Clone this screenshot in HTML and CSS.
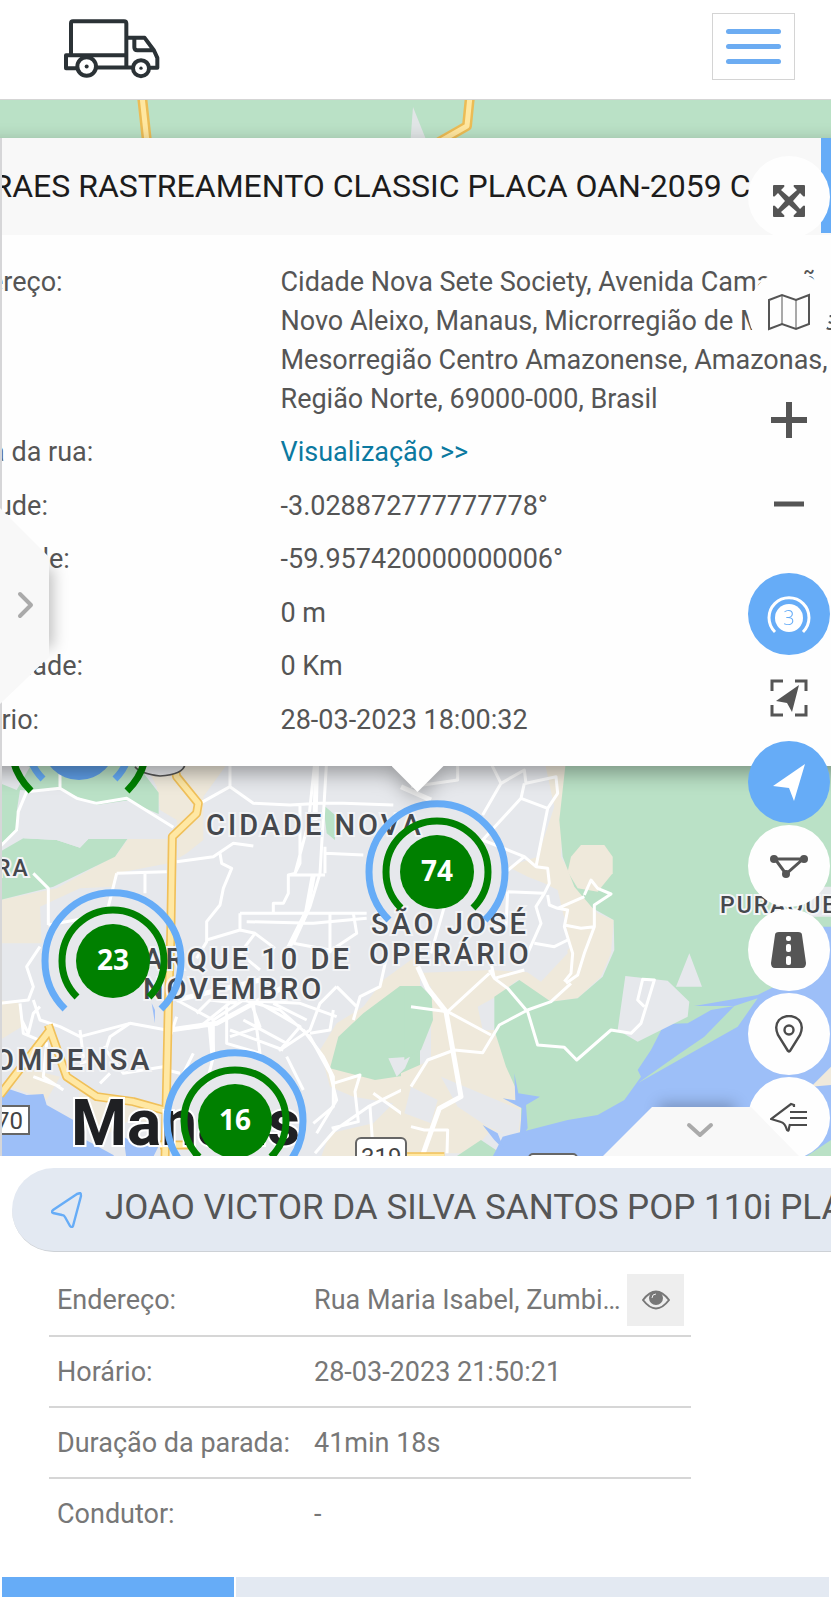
FILE: index.html
```html
<!DOCTYPE html>
<html lang="pt-BR">
<head>
<meta charset="utf-8">
<meta name="viewport" content="width=device-width, initial-scale=1">
<title>Rastreamento</title>
<link rel="stylesheet" href="styles.css">
</head>
<body>
<header class="topbar">
  <a href="#" class="logo" aria-label="Início">
    <svg viewBox="188 50 294 188" fill="none" stroke="#2b3236" stroke-width="12" stroke-linejoin="round">
      <path d="M212 164V68q0-6 6-6h153q7 0 7 7v131M212 164H378M212 164h-15v39h33M290 201H396M378 112h55l28 38 10 22v30h-22M402 114v26q0 9 9 9h49"/>
      <circle cx="259" cy="198" r="28"/><circle cx="422" cy="203" r="24"/>
      <circle cx="259" cy="198" r="6" fill="#2b3236" stroke="none"/><circle cx="422" cy="203" r="5" fill="#2b3236" stroke="none"/>
    </svg>
  </a>
  <button class="menu" aria-label="Menu"><span></span><span></span><span></span></button>
</header>

<main class="map">
  <svg class="canvas" viewBox="0 100 831 1056" preserveAspectRatio="xMinYMin slice">
    <rect y="100" width="831" height="1056" fill="#e6e8ec"/>
    <rect y="100" width="831" height="100" fill="#bae1c6"/>
    <path d="M413 107l16 40h-19z" fill="#e1e5e6"/>
    <g fill="none" stroke-linejoin="round">
      <path d="M142 96l5 46M470 96l-3 30-28 16" stroke="#ecbc55" stroke-width="10"/>
      <path d="M142 96l5 46M470 96l-3 30-28 16" stroke="#ffe7a0" stroke-width="5"/>
    </g>

    <g transform="translate(0 740) scale(.33333)">
      <path class="sand" d="M430 60H690L610 170V300L560 340 535 355 530 240 480 210 470 140zM0 480L170 445 350 345 385 295 510 297 505 370 350 400 340 440 240 445 120 500 125 610H0zM0 780L60 790 65 860 0 900z"/>
      <path class="sand" d="M1260 640L1150 720 1090 800 1010 850 960 930 990 1040 1060 1070 1180 1090 1120 1150 990 1180 960 1260H1260zM240 1040L490 1110 480 1150 390 1140 310 1190 230 1150zM60 980L180 1010 140 1080 30 1040z"/>
      <path class="green" d="M0 60H400L476 158V222L400 190 290 205 180 160 60 150 50 215 0 215zM0 215L50 215 55 270 0 325zM0 335L70 295 170 300 240 323 265 297 382 297 345 350 160 440 0 480z"/>
      <path class="green" d="M1200 738H1260V1000L1125 1020 990 985 1015 890 1090 820zM970 195L1005 225 1005 300 980 280z"/>
      <path class="city" d="M1165 955L1230 950 1215 985 1190 1010zM0 130L50 150 90 80 0 60zM60 160L180 148 290 195 390 180 510 265 500 297H265L240 323 170 300 70 295z"/>
      <path class="water" d="M0 1050L20 1045 80 1065 130 1062 140 1095 220 1140 240 1190 340 1245 350 1260H0zM370 1190l45 25 60 5-20 40H380zM455 790l10 20v40z"/>
      <g class="road">
        <path d="M-5 325L50 270 55 215 80 155 180 145 230 175 290 190 380 175 520 262M180 60V145M530 365L640 350 700 310 760 318M690 60V140L600 190M690 140L760 190 870 195 960 190 1030 190 1180 195M945 60L925 250 885 400 865 405V460L850 490 820 490V520M980 60L960 400 930 500 880 610M900 190V370L885 400M865 405H975M975 320V400M975 340L1090 345M660 340l5 30 30 15-25 60-10 50-40 50v60l-30 50M720 520H1100M720 520v50L620 600M740 545l200 5 160-15"/>
        <path d="M720 570l45 10 60 45M765 580l-45 60 60 50M990 520v120M880 610l110 20M350 400l150-5M435 400v60M350 400l-30 120M100 400l45 45v110M145 555l110-20M120 620l-40 60 20 60-15 40-85 10M100 780l20 60 60 20 60 30 150-40 110 20 100-10 100-80 200 10 110 40M530 780l110 60v110l-20 80M640 840l90-60 110 30 90 80 60 110 20 80-60 100M590 820l40-40 80 10M680 800v110l100 30-20-150M780 790l120 70-60 70 90-60 30-80 50-50M690 870l160 60M730 840l130 70M750 780l30 80-90 30M820 790l100 50"/>
        <path d="M930 880l60-10 10-60M1160 650l-20 90-60 30-20 70M1010 740l60 60M910 870l60 80 30 60v90l-60 50M1000 1030l80-25-15 50 10 90-80 20M945 1240l60-70 100-70 160-80M1110 1100l10 140M1120 1060l140 100M530 830l-20 60M390 850l-60 40-20 60-70 20M310 920l60 80 120-20M240 870l10 80-60 30M330 1000l-30 30M540 1000l-40-10M580 940l-50 100M860 950l50 100M120 800l-20 20-15 60-20-40M60 790l10 90 70 30-10 100 60 40M100 1010l80 30M1060 520l10 60-90 60"/>
      </g>
      <g class="road wide"><path d="M950 60l-5 180M940 405l-20 110-60 120M530 780l250-60M510 870l140-20 240-130M630 850l10 110"/></g>
      <g class="hw-edge"><path d="M520 60L530 110 595 190 590 220 517 290 512 600 505 800 495 1260M145 855L200 1010 290 1070 400 1085 490 1110M150 870L0 1065M480 1215h100"/></g>
      <g class="hw-core"><path d="M520 60L530 110 595 190 590 220 517 290 512 600 505 800 495 1260M145 855L200 1010 290 1070 400 1085 490 1110M150 870L0 1065M480 1215h100"/></g>
      <path d="M405 80q15 20 75 28 70-5 75-35" fill="#e8eaed" stroke="#555" stroke-width="5"/>
    </g>

    <g transform="translate(411 740) scale(.33333)">
      <path class="sand" d="M400 60H480L455 240 450 350 520 470 560 520 608 540 600 640 570 710 500 775 420 785 320 720 255 770 200 800 215 870 260 870 290 980 330 1080 330 1190 240 1170 180 1240H-30L-30 1000 60 960 60 740 0 700 240 690 400 700 480 620 440 450 400 430 350 410 290 380 380 350 430 200z"/>
      <path class="city" d="M270 480L380 460 460 530 470 640 390 725 340 690 260 680zM90 1010L330 1110 320 1195 230 1160 140 1100zM0 1040L80 1080 60 1150-20 1120z"/>
      <path class="green" d="M465 60H1290V800L740 1260 330 1190 330 1080 285 980 250 870 250 770 325 720 420 785 500 775 575 710 610 630 608 540 545 505 490 440 455 350 445 240zM-20 738H30L62 770 66 840 30 930-20 960zM120 1260l90-60 90 60z"/>
      <path class="sand" d="M480 350l30-35h70l25 35v50l-45 55-60-10-30-50z"/>
      <path class="water" d="M240 1260L275 1190 345 1172 470 1140 560 1125 640 1080 690 1010 680 990 720 930 760 852 830 850 900 810 970 798 850 798 1040 765 1090 740 1230 560 1270 560V1260z"/>
      <path class="water" d="M310 1000l12 60 65 10-42 25 5 70-25 35 8-95-58-30 38 6zM215 1155l45 25 20 50-30-30z"/>
      <path class="green" d="M970 798L1040 775 980 860 830 945 680 1030 800 945 880 890zM1170 1260l90-60v60z"/>
      <path class="sand" d="M1200 1040L1260 980V1035z"/>
      <path class="city" d="M835 640l38 100h-78zM643 708L770 722 835 785 830 830 680 905 620 870zM1180 440h80v90h-60z"/>
      <g class="road">
        <path d="M235 60L270 130 215 225M270 130L340 90 345 130 435 110 440 160 410 205 330 175 340 130M140 60V120L0 140M330 175L215 300 340 350 375 380 410 205M375 380L410 385 415 430 400 460 290 455M410 465L415 495 440 505 520 470M340 350L280 400M290 455L285 560 240 560M400 460L375 500 390 550 350 640M520 465L540 420 560 445 600 462 550 495V560L520 640 500 705 465 730M440 505L470 510 460 560 485 640 480 700 460 725M460 555L510 565 550 560M370 610L430 620 470 600"/>
        <path d="M235 690L250 715 290 745 350 815 380 915 460 922 497 960 600 870 660 880 690 850 730 720 695 718 680 780 700 800M235 700L110 815 0 800M110 815L240 885M340 690L250 715M0 1040L50 960 130 930 215 938 265 855 350 810 420 785 480 730M0 1160L40 1170 110 1170 108 1240M250 715L230 620M100 500L60 640"/>
      </g>
      <g class="road wide"><path d="M20 680L50 745 105 815 150 1070 85 1105 35 1245M-30 140L60 180"/></g>
      <g class="hw-edge"><path d="M-20 1250h120"/></g><g class="hw-core"><path d="M-20 1250h120"/></g>
    </g>

    <g class="place">
      <text x="206" y="835">CIDADE NOVA</text>
      <text x="124" y="969">PARQUE 10 DE</text>
      <text x="143" y="999">NOVEMBRO</text>
      <text x="371" y="934">SÃO JOSÉ</text>
      <text x="369" y="964">OPERÁRIO</text>
      <text x="-28" y="1070">COMPENSA</text>
      <text x="-4" y="876" class="small">RA</text>
      <text x="720" y="913" class="small">PURAQUE</text>
    </g>
    <text x="71" y="1145" class="capital">Manaus</text>
    <g class="shield">
      <rect x="-20" y="1106" width="49" height="28"/><text x="-4" y="1129">70</text>
      <rect x="356" y="1138" width="50" height="36" rx="5"/><text x="361" y="1165">319</text>
      <rect x="529" y="1154" width="48" height="20" rx="4"/>
    </g>

    <g class="cluster" transform="translate(79 743)">
      <path stroke="#008000" d="M-48 48A68 68 0 1 1 48 48"/><path stroke="#66acf7" d="M-36 36A51 51 0 1 1 36 36"/>
      <circle r="37" fill="#66acf7"/>
    </g>
    <g class="cluster" transform="translate(437 872)">
      <path stroke="#66acf7" d="M-48 48A68 68 0 1 1 48 48"/><path stroke="#008000" d="M-36 36A51 51 0 1 1 36 36"/>
      <circle r="37"/><text y="9">74</text>
    </g>
    <g class="cluster" transform="translate(113 961)">
      <path stroke="#66acf7" d="M-48 48A68 68 0 1 1 48 48"/><path stroke="#008000" d="M-36 36A51 51 0 1 1 36 36"/>
      <circle r="37"/><text y="9">23</text>
    </g>
    <g class="cluster" transform="translate(235 1121)">
      <path stroke="#66acf7" d="M-48 48A68 68 0 1 1 48 48"/><path stroke="#008000" d="M-36 36A51 51 0 1 1 36 36"/>
      <circle r="37"/><text y="9">16</text>
    </g>
  </svg>

  <section class="popup">
    <div class="popup-head">
      <h2>MORAES RASTREAMENTO CLASSIC PLACA OAN-2059 C</h2>
      <button class="close" aria-label="Fechar"></button>
    </div>
    <table class="details">
      <tr><th scope="row">Endereço:</th><td>Cidade Nova Sete Society, Avenida Camapuã, Novo Aleixo, Manaus, Microrregião de Manaus, Mesorregião Centro Amazonense, Amazonas, Região Norte, 69000-000, Brasil</td></tr>
      <tr><th scope="row">Vista da rua:</th><td><a href="#">Visualização &gt;&gt;</a></td></tr>
      <tr><th scope="row">Latitude:</th><td>-3.028872777777778°</td></tr>
      <tr><th scope="row">Longitude:</th><td>-59.957420000000006°</td></tr>
      <tr><th scope="row">Altitude:</th><td>0 m</td></tr>
      <tr><th scope="row">Velocidade:</th><td>0 Km</td></tr>
      <tr><th scope="row">Horário:</th><td>28-03-2023 18:00:32</td></tr>
    </table>
  </section>

  <nav class="tools" aria-label="Ferramentas do mapa">
    <button class="tool expand" aria-label="Tela cheia"><svg viewBox="0 0 32 32" fill="#555"><path d="M0 1q0-1 1-1h10q1 1 0 2L8 5l8 7 8-7-3-3q-1-1 0-2h10q1 0 1 1v10q-1 1-2 0l-3-3-7 8 7 8 3-3q1-1 2 0v10q0 1-1 1H21q-1-1 0-2l3-3-8-7-8 7 3 3q1 1 0 2H1q-1 0-1-1V21q1-1 2 0l3 3 7-8-7-8-3 3q-1 1-2 0z"/></svg></button>
    <button class="tool" aria-label="Tipo de mapa"><svg class="lg" viewBox="0 0 44 38" fill="none" stroke="#555" stroke-width="2"><path d="M2 7L15 2l14 5 13-5v29l-13 5-14-5-13 5z"/><path d="M15 2v29M29 7v29" stroke-width="1"/></svg></button>
    <button class="tool zoom-in" aria-label="Aproximar"><svg class="lg" viewBox="0 0 38 38" stroke="#555" stroke-width="6"><path d="M19 1v36M1 19h36"/></svg></button>
    <button class="tool" aria-label="Afastar"><svg class="lg" viewBox="0 0 38 38" stroke="#555" stroke-width="5"><path d="M4 19h30"/></svg></button>
    <button class="tool on group" aria-label="Agrupar"><svg class="xl" viewBox="0 0 44 44" fill="none" stroke="#fff" stroke-width="3"><path d="M8 40A20 20 0 1 1 36 40"/><circle cx="22" cy="26" r="14" fill="#fff" stroke="none"/><text x="22" y="33" class="digit">3</text></svg></button>
    <button class="tool" aria-label="Enquadrar"><svg class="lg" viewBox="0 0 38 38"><path d="M2 12V2h11M25 2h11v10M36 26v10H25M13 36H2V26" fill="none" stroke="#555" stroke-width="3"/><path d="M29 6L22 33 17 24 6 22z" fill="#555"/></svg></button>
    <button class="tool on" aria-label="Seguir"><svg class="lg" viewBox="0 0 38 38"><path d="M35 1L24 38 19 25 3 23z" fill="#fff"/></svg></button>
    <button class="tool" aria-label="Zonas"><svg class="lg" viewBox="0 0 38 38"><path d="M5 12h28L16 27z" fill="none" stroke="#555" stroke-width="3"/><g fill="#555"><circle cx="4" cy="12" r="4"/><circle cx="34" cy="12" r="4"/><circle cx="16" cy="27" r="4"/></g></svg></button>
    <button class="tool" aria-label="Rotas"><svg class="lg" viewBox="0 0 38 38"><path d="M9 1h19q4 0 4 3l4 28q0 5-4 5H5q-4 0-4-5L5 4q0-3 4-3z" fill="#555"/><g fill="#fff"><rect x="16" y="5" width="5" height="5" rx="2"/><rect x="16" y="13" width="5" height="8" rx="2"/><rect x="16" y="25" width="5" height="9" rx="2"/></g></svg></button>
    <button class="tool" aria-label="Marcadores"><svg class="lg" viewBox="0 0 38 38" fill="none" stroke="#4b4b4b" stroke-width="2.4"><path d="M18 36L8 20Q4 11 9 5q4-4 10-4t10 4q5 6 1 15L20 36q-1 1-2 0z"/><circle cx="19" cy="15" r="4.5"/></svg></button>
    <button class="tool" aria-label="Lista de veículos"><svg class="lg" viewBox="0 0 38 38" fill="none" stroke="#4b4b4b" stroke-width="2.2"><path d="M24 8V6l-3-1L1 20l10 3q4 1 6 8 2 2 2-2l1-4"/><path d="M20 13h17M20 19h17M20 26h17"/></svg></button>
  </nav>

  <button class="handle-left" aria-label="Abrir painel"><svg viewBox="0 0 49 196"><path d="M0 0L49 49V149L0 196z" fill="#f8f8f8"/><path d="M20 86l11 11-11 11" fill="none" stroke="#aaa" stroke-width="4" stroke-linecap="round" stroke-linejoin="round"/></svg></button>
  <button class="handle-bottom" aria-label="Recolher painel"><svg viewBox="0 0 196 49"><path d="M0 49L49 0H148L196 49z" fill="#f8f8f8"/><path d="M86 18l11 10 11-10" fill="none" stroke="#aaa" stroke-width="4" stroke-linecap="round" stroke-linejoin="round"/></svg></button>
</main>

<section class="panel">
  <h1 class="vehicle">
    <svg viewBox="0 0 32 36" fill="none" stroke="#66acf7" stroke-width="2.4" stroke-linejoin="round"><path d="M29 1q1 0 1 3l-8 30q-1 2-3 0l-5-9q-1-2-3-2L2 21q-2-1 0-3L26 2z"/></svg>
    <span>JOAO VICTOR DA SILVA SANTOS POP 110i PLACA</span>
  </h1>
  <table class="info">
    <tr><th scope="row">Endereço:</th><td><div class="address"><span>Rua Maria Isabel, Zumbi dos Palmares</span><button class="eye" aria-label="Ver endereço"><svg viewBox="0 0 28 20"><path d="M1 10Q14-7 27 10 14 27 1 10z" fill="none" stroke="#777" stroke-width="2"/><circle cx="14" cy="8" r="7" fill="#777"/><path d="M10 8q0-4 4-4" fill="none" stroke="#eee" stroke-width="1"/></svg></button></div></td></tr>
    <tr><th scope="row">Horário:</th><td>28-03-2023 21:50:21</td></tr>
    <tr><th scope="row">Duração da parada:</th><td>41min 18s</td></tr>
    <tr><th scope="row">Condutor:</th><td>-</td></tr>
  </table>
  <div class="progress"><span></span><span></span></div>
</section>
</body>
</html>
```
FILE: styles.css
```css
* { box-sizing: border-box; }

body {
  margin: 0;
  min-height: 100vh;
  display: flex;
  flex-direction: column;
  overflow-x: hidden;
  background: #fff;
  color: #555;
  font-family: Roboto, "Liberation Sans", sans-serif;
  font-size: 27px;
}

button { border: 0; padding: 0; background: none; font: inherit; cursor: pointer; }
table { border-collapse: collapse; }
th, td { padding: 0; font-weight: 400; text-align: left; vertical-align: top; }

/* Header */
.topbar {
  display: flex;
  justify-content: space-between;
  align-items: flex-start;
  height: 100px;
  padding: 13px 36px 0 63px;
  border-bottom: 1px solid #d5d5d5;
}
.logo { margin-top: 4px; }
.logo svg { display: block; width: 98px; height: 63px; }
.menu {
  display: flex;
  flex-direction: column;
  align-items: center;
  justify-content: center;
  gap: 10px;
  width: 83px;
  height: 67px;
  border: 1px solid #d4d4d4;
}
.menu span { width: 55px; height: 5px; border-radius: 3px; background: #6cacf2; }

/* Map */
.map { position: relative; flex: 1; min-height: 1056px; overflow: hidden; }
.map::before {
  content: "";
  position: absolute;
  z-index: 2;
  top: 38px;
  bottom: 0;
  left: 0;
  width: 2px;
  background: #d6d6d8;
}
.canvas { position: absolute; width: 100%; height: 100%; }
.sand { fill: #efe9db; }
.green { fill: #bae1c6; }
.water { fill: #9dbff8; }
.city { fill: #e6e8ec; }
.road { fill: none; stroke: #fff; stroke-width: 9; stroke-linejoin: round; }
.road.wide { stroke-width: 15; }
.hw-edge { fill: none; stroke: #f0c05a; stroke-width: 27; stroke-linejoin: round; }
.hw-core { fill: none; stroke: #ffe8a4; stroke-width: 17; stroke-linejoin: round; }
.place {
  font-size: 29px;
  font-weight: 500;
  letter-spacing: 3px;
  fill: #45484d;
  stroke: #f3f4f6;
  stroke-width: 4px;
  paint-order: stroke;
}
.place .small { font-size: 23px; letter-spacing: 2px; }
.capital { font-size: 64px; font-weight: 700; fill: #1f2023; stroke: #fff; stroke-width: 4px; paint-order: stroke; }
.shield { font-size: 24px; }
.shield rect { fill: #fff; stroke: #666; stroke-width: 2px; }
.shield text { fill: #444; }
.cluster path { fill: none; stroke-width: 7px; }
.cluster circle { fill: #008000; }
.cluster circle[fill] { fill: #5f9fe8; }
.cluster text { font: 700 28px "Open Sans", sans-serif; fill: #fff; text-anchor: middle; }

/* Vehicle popup */
.popup {
  position: absolute;
  top: 38px;
  left: 50%;
  width: 1008px;
  margin-left: -502px;
  padding-bottom: 19px;
  background: #fefefe;
  filter: drop-shadow(0 7px 10px rgba(0, 0, 0, .35));
}
.popup::after {
  content: "";
  position: absolute;
  top: 100%;
  left: 50%;
  width: 52px;
  height: 26px;
  margin-left: -26px;
  background: #fefefe;
  clip-path: polygon(0 0, 100% 0, 50% 100%);
}
.popup-head { display: flex; justify-content: space-between; height: 97px; background: #f8f8f8; }
.popup-head h2 { margin: 0; padding-left: 29px; font-size: 32px; font-weight: 400; line-height: 96px; color: #1c1c1c; white-space: nowrap; }
.close { width: 101px; height: 95px; background: #66acf7; }
.details { width: 948px; margin: 20px 30px 0; line-height: 39px; }
.details th { width: 337px; }
.details th, .details td { padding: 7px 0; }
.details td { padding-right: 20px; }
.details tr:nth-child(odd) > * { padding-top: 8px; }
.details a { color: #0b79a0; text-decoration: none; }

/* Tool rail */
.tools {
  position: absolute;
  top: 56px;
  right: 1px;
  display: flex;
  flex-direction: column;
  gap: 2px;
}
.tool {
  display: flex;
  align-items: center;
  justify-content: center;
  width: 82px;
  height: 82px;
  border-radius: 50%;
  background: #fefefe;
}
.tool.on { background: #66acf7; }
.tool svg { width: 32px; height: 32px; }
.tool svg.lg { width: 38px; height: 38px; }
.tool svg.xl { width: 44px; height: 44px; }
.tool:nth-child(2) svg { width: 44px; }
.tool.expand { padding-top: 8px; margin-bottom: 31px; }
.tool.zoom-in { margin-top: 24px; }
.tool.group { margin-top: 26px; }
.digit { font: 300 20px "Open Sans", sans-serif; fill: #66acf7; stroke: none; text-anchor: middle; }

/* Panel handles */
.handle-left { position: absolute; z-index: 3; top: 408px; left: 0; width: 49px; }
.handle-bottom { position: absolute; z-index: 3; right: 32px; bottom: 0; width: 196px; }
.handle-left svg, .handle-bottom svg { position: relative; display: block; width: 100%; }
.handle-left::before {
  content: "";
  position: absolute;
  top: 60px;
  bottom: 56px;
  left: 0;
  right: 0;
  box-shadow: 4px 0 14px rgba(0, 0, 0, .25);
}
.handle-bottom::before {
  content: "";
  position: absolute;
  top: 0;
  bottom: 0;
  left: 56px;
  right: 64px;
  box-shadow: 0 -3px 14px rgba(0, 0, 0, .25);
}

/* Bottom panel */
.panel { padding-top: 12px; }
.vehicle {
  display: flex;
  align-items: center;
  gap: 22px;
  height: 84px;
  margin: 0 0 0 12px;
  padding-left: 39px;
  border-bottom: 1px solid #cdd1d6;
  border-radius: 42px 0 0 42px;
  background: #e3e9f2;
  font-size: 35px;
  font-weight: 400;
  white-space: nowrap;
  overflow: hidden;
}
.vehicle svg { flex: none; width: 32px; height: 36px; }
.vehicle span { padding-bottom: 4px; }
.info { width: 642px; margin: 13px 0 0 49px; color: #777; table-layout: fixed; }
.info tr + tr { border-top: 2px solid #d6d6d6; }
.info th, .info td { height: 71px; vertical-align: middle; white-space: nowrap; }
.info th { width: 265px; padding-left: 8px; }
.address { display: flex; align-items: center; justify-content: space-between; gap: 5px; padding-right: 7px; }
.address span { flex: 1; overflow: hidden; text-overflow: ellipsis; }
.eye { display: flex; align-items: center; justify-content: center; width: 57px; height: 52px; background: #eee; }
.eye svg { width: 28px; height: 20px; }
.progress { display: flex; gap: 2px; margin: 28px 2px 2px; }
.progress span { flex: 1; height: 20px; background: #e3e9f2; }
.progress span:first-child { flex: none; width: 28%; background: #66acf7; }
```
